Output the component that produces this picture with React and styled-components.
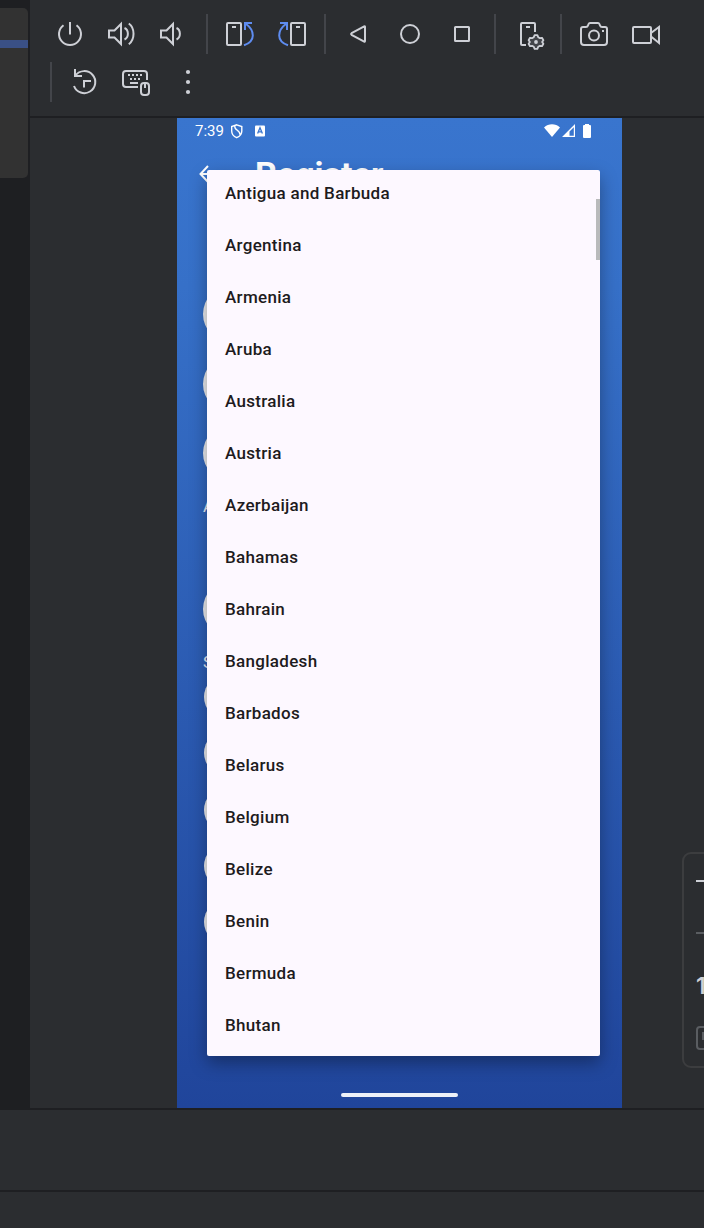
import React from "react";
import styled, { createGlobalStyle } from "styled-components";

const GlobalStyle = createGlobalStyle`
  *, *::before, *::after { box-sizing: border-box; }
  body { margin: 0; background: #1e1f22; font-family: Roboto, "Liberation Sans", sans-serif; }
`;

const Page = styled.div`
  width: 704px;
  height: 1228px;
  overflow: hidden;
  display: flex;
  flex-direction: column;
  gap: 2px;
  background: #1e1f22;
`;
const Workspace = styled.div`
  display: flex;
  height: 1108px;
`;
const Gutter = styled.div`
  width: 30px;
  padding: 8px 2px 0 0;
`;
const EditorStub = styled.div`
  height: 170px;
  padding-top: 32px;
  border-radius: 0 5px 5px 0;
  background: #323232;
`;
const SelectedLine = styled.div`
  height: 8px;
  background: #3a5085;
`;
const Emulator = styled.div`
  flex: 1;
  display: flex;
  flex-direction: column;
  gap: 2px;
`;
const Toolbar = styled.div`
  height: 116px;
  padding: 10px 0 0 14px;
  background: #2b2d30;
`;
const ToolRow = styled.div`
  display: flex;
  align-items: center;
  height: 48px;
`;
const ToolButton = styled.button`
  width: 52px;
  height: 48px;
  padding: 0;
  border: 0;
  background: none;
  color: #ced0d6;
  svg { display: block; }
`;
const Separator = styled.div`
  width: 2px;
  height: 40px;
  margin: 0 6px;
  background: #43454a;
`;
const Stage = styled.div`
  position: relative;
  flex: 1;
  display: flex;
  padding-left: 147px;
  background: #2b2d30;
  overflow: hidden;
`;
const Phone = styled.div`
  position: relative;
  width: 445px;
  height: 990px;
  overflow: hidden;
  display: flex;
  flex-direction: column;
  background: linear-gradient(180deg, #3975ce 0%, #3670c8 17%, #20459b 100%);
  color: #fff;
`;
const StatusBar = styled.div`
  height: 26px;
  padding: 0 31px 0 18px;
  display: flex;
  align-items: center;
  font-size: 15px;
  svg { display: block; }
`;
const Clock = styled.span`
  width: 36px;
  line-height: 26px;
`;
const StatusIcons = styled.div`
  display: flex;
  margin-left: ${(p) => (p.$end ? "auto" : 0)};
`;
const Header = styled.div`
  height: 60px;
  padding-left: 21px;
  display: flex;
  align-items: center;
  svg { display: block; }
`;
const Title = styled.h1`
  margin: 0 0 0 35px;
  font-size: 34px;
  line-height: 40px;
  font-weight: 700;
`;
const Form = styled.div`
  flex: 1;
  padding: 81px 22px 0 26px;
`;
const Field = styled.div`
  height: ${(p) => (p.$small ? 46 : 58)}px;
  margin-bottom: ${(p) => (p.$small ? 10.25 : 11.5)}px;
  margin-left: ${(p) => (p.$small ? 1 : 0)}px;
  border-radius: 30px;
  background: #ebebee;
`;
const Label = styled.div`
  height: ${(p) => p.$height}px;
  font-size: 17px;
  line-height: 24px;
  color: #e8edf8;
`;
const HomeHandle = styled.div`
  width: 117px;
  height: 4px;
  margin: 0 0 11px 164px;
  border-radius: 2px;
  background: #edf1f8;
`;
const Menu = styled.div`
  position: absolute;
  left: 30px;
  top: 52px;
  width: 393px;
  height: 886px;
  overflow: hidden;
  border-radius: 2px;
  background: #fdf8ff;
  box-shadow: 0 7px 17px rgba(0, 0, 0, 0.34);
`;
const MenuList = styled.ul`
  margin: -3px 0 0;
  padding: 0;
  list-style: none;
`;
const MenuItem = styled.li`
  height: 52px;
  padding-left: 18px;
  line-height: 52px;
  font-size: 17px;
  font-weight: 500;
  letter-spacing: 0.3px;
  color: #1d1b20;
`;
const ScrollThumb = styled.div`
  position: absolute;
  right: 0;
  top: 29px;
  width: 4px;
  height: 61px;
  background: #b9babb;
`;
const ZoomPanel = styled.div`
  position: absolute;
  left: 652px;
  top: 734px;
  width: 60px;
  height: 216px;
  padding: 26px 0 0 12px;
  border: 2px solid #3c3d3f;
  border-radius: 9px;
`;
const ZoomBar = styled.div`
  height: 2px;
  margin-bottom: ${(p) => p.$gap}px;
  background: ${(p) => p.$color};
`;
const ZoomReset = styled.div`
  height: 26px;
  margin-bottom: 27px;
  font-family: Inter, sans-serif;
  font-weight: 600;
  font-size: 23px;
  line-height: 26px;
  color: #ced0d6;
`;
const FitBox = styled.div`
  width: 24px;
  height: 24px;
  padding: 4px;
  border: 2px solid #5a5d61;
  border-radius: 4px;
`;
const FitMark = styled.div`
  width: 10px;
  height: 8px;
  background: #5a5d61;
`;
const BottomBar = styled.div`
  height: ${(p) => p.$height}px;
  flex: none;
  background: #2b2d30;
`;

const Glyph = ({ children }) => (
  <svg width="52" height="48" viewBox="0 0 52 48" fill="none" stroke="currentColor" strokeWidth="2">
    {children}
  </svg>
);

const RotateShape = () => (
  <>
    <rect x="13" y="13" width="14" height="22" rx="1" />
    <path d="M18 17h4" />
    <path d="M38 13h-7v7M31.5 13.5C41 20.500 42 31 30 35.300" stroke="#5e8cf0" />
  </>
);

const icons = {
  power: (
    <Glyph>
      <path d="M26 12v12.500M19.500 15.200a11 11 0 1 0 13 0" />
    </Glyph>
  ),
  volumeUp: (
    <Glyph>
      <path d="M13 20.500h5.500L25 14v20l-6.500-6.500H13z" />
      <path d="M28.500 18c4.500 2 4.500 9.500 0 11.500M32.800 13.500c6.300 4.500 6.300 16 0 20.700" />
    </Glyph>
  ),
  volumeDown: (
    <Glyph>
      <path d="M13 20.500h5.500L25 14v20l-6.500-6.500H13z" />
      <path d="M28.500 18c4.500 2 4.500 9.500 0 11.500" />
    </Glyph>
  ),
  rotateLeft: <Glyph><RotateShape /></Glyph>,
  rotateRight: <Glyph><g transform="translate(52 0) scale(-1 1)"><RotateShape /></g></Glyph>,
  back: <Glyph><path d="M19.600 23.200 32.200 16.400q.8-.4.8.5v14.200q0 .9-.8.5L19.600 24.800q-1-.8 0-1.600z" /></Glyph>,
  home: <Glyph><circle cx="26" cy="24" r="9" /></Glyph>,
  overview: <Glyph><rect x="19" y="17" width="14" height="14" rx="0.500" /></Glyph>,
  deviceSettings: (
    <Glyph>
      <path d="M24 35h-4q-1 0-1-1V14q0-1 1-1h12q1 0 1 1v8M24 17h4" />
      <path
        d="M32.600 25.200h2.800l.8 2 1.700.9 2.100-.3 1.400 2.400-1.300 1.800 1.300 1.800-1.400 2.400-2.100-.3-1.700.9-.8 2h-2.800l-.8-2-1.700-.9-2.100.3-1.400-2.400 1.300-1.800-1.300-1.800 1.400-2.400 2.100.3 1.700-.9z"
        fill="#43454a"
        strokeWidth="1.800"
        strokeLinejoin="round"
      />
      <circle cx="34" cy="32" r="1.900" fill="currentColor" stroke="none" />
    </Glyph>
  ),
  camera: (
    <Glyph>
      <path d="M13 19q0-2 2-2h3q1.500 0 2-1.500l.6-1.500q.4-1 1.400-1h8q1 0 1.400 1l.6 1.500q.5 1.500 2 1.500h3q2 0 2 2v13q0 3-3 3H16q-3 0-3-3z" />
      <circle cx="26" cy="25.500" r="5" />
      <path d="M34 21h2" />
    </Glyph>
  ),
  video: (
    <Glyph>
      <rect x="13" y="17" width="18" height="16" rx="1" />
      <path d="M31 23l8-6v16l-8-6.500" />
    </Glyph>
  ),
  history: (
    <Glyph>
      <path d="M17 11v7h7M17.500 17.500A11 11 0 1 1 16 28M26 29.500V23h7" />
    </Glyph>
  ),
  input: (
    <Glyph>
      <path d="M28 29H16q-3 0-3-3V16q0-3 3-3h18q3 0 3 3v6" />
      <path d="M18 17h2m2 0h2m2 0h2m2 0h2M20 21h2m2 0h2m2 0h2M20 25h8" />
      <rect x="31" y="25" width="8" height="12" rx="3" />
      <path d="M35 25v5" />
    </Glyph>
  ),
  more: (
    <Glyph>
      <g fill="currentColor" stroke="none">
        <circle cx="26" cy="14" r="2.100" />
        <circle cx="26" cy="24" r="2.100" />
        <circle cx="26" cy="34" r="2.100" />
      </g>
    </Glyph>
  ),
};

const toolRows = [
  ["power", "volumeUp", "volumeDown", null, "rotateLeft", "rotateRight", null, "back", "home", "overview", null, "deviceSettings", null, "camera", "video"],
  [null, "history", "input", "more"],
];

const countries = [
  "Antigua and Barbuda", "Argentina", "Armenia", "Aruba", "Australia", "Austria",
  "Azerbaijan", "Bahamas", "Bahrain", "Bangladesh", "Barbados", "Belarus",
  "Belgium", "Belize", "Benin", "Bermuda", "Bhutan",
];

export default function App() {
  return (
    <>
      <GlobalStyle />
      <Page>
        <Workspace>
          <Gutter>
            <EditorStub><SelectedLine /></EditorStub>
          </Gutter>
          <Emulator>
            <Toolbar>
              {toolRows.map((row, r) => (
                <ToolRow key={r}>
                  {row.map((name, i) =>
                    name ? <ToolButton key={i} aria-label={name}>{icons[name]}</ToolButton> : <Separator key={i} />
                  )}
                </ToolRow>
              ))}
            </Toolbar>
            <Stage>
              <Phone>
                <StatusBar>
                  <Clock>7:39</Clock>
                  <StatusIcons>
                    <svg width="36" height="16" viewBox="0 0 36 16" fill="none" stroke="#fff" strokeWidth="1.400">
                      <path d="M5.700 1.800 10.800 3.600V8c0 3-2 5.500-5.100 6.700C2.600 13.500.7 11 .7 8V3.600zM3.800 2.800C3 7.500 9.500 7 9 11.800" />
                      <rect x="24" y="2.500" width="10" height="11" rx="1" fill="#fff" stroke="none" />
                      <path d="M26.600 10.500 29 4.800l2.400 5.700M27.400 8.800h3.200" stroke="#3975cf" strokeWidth="1.300" />
                    </svg>
                  </StatusIcons>
                  <StatusIcons $end>
                    <svg width="47" height="16" viewBox="0 0 47 16" fill="#fff">
                      <path d="M0 4.500C4.500.2 11.500.2 16 4.500L8 14z" />
                      <path fillRule="evenodd" d="M31 1v13H18zM29.800 4.200 25.500 8.500v4.300h4.300z" />
                      <path d="M39 3q0-1 1-1h1V1h4v1h1q1 0 1 1v11q0 1-1 1h-6q-1 0-1-1z" />
                    </svg>
                  </StatusIcons>
                </StatusBar>
                <Header>
                  <svg width="22" height="20" viewBox="0 0 22 20" fill="none" stroke="#fff" strokeWidth="2">
                    <path d="M10 2 2.500 10l7.500 8M2.500 10H20" />
                  </svg>
                  <Title>Register</Title>
                </Header>
                <Form>
                  <Field />
                  <Field />
                  <Field />
                  <Label $height={86.5}>A</Label>
                  <Field />
                  <Label $height={24.5}>S</Label>
                  <Field $small />
                  <Field $small />
                  <Field $small />
                  <Field $small />
                  <Field $small />
                </Form>
                <HomeHandle />
                <Menu>
                  <MenuList>
                    {countries.map((c) => <MenuItem key={c}>{c}</MenuItem>)}
                  </MenuList>
                  <ScrollThumb />
                </Menu>
              </Phone>
              <ZoomPanel>
                <ZoomBar $color="#ced0d6" $gap={50} />
                <ZoomBar $color="#5a5d61" $gap={39} />
                <ZoomReset>1:1</ZoomReset>
                <FitBox><FitMark /></FitBox>
              </ZoomPanel>
            </Stage>
          </Emulator>
        </Workspace>
        <BottomBar $height={80} />
        <BottomBar $height={36} />
      </Page>
    </>
  );
}
